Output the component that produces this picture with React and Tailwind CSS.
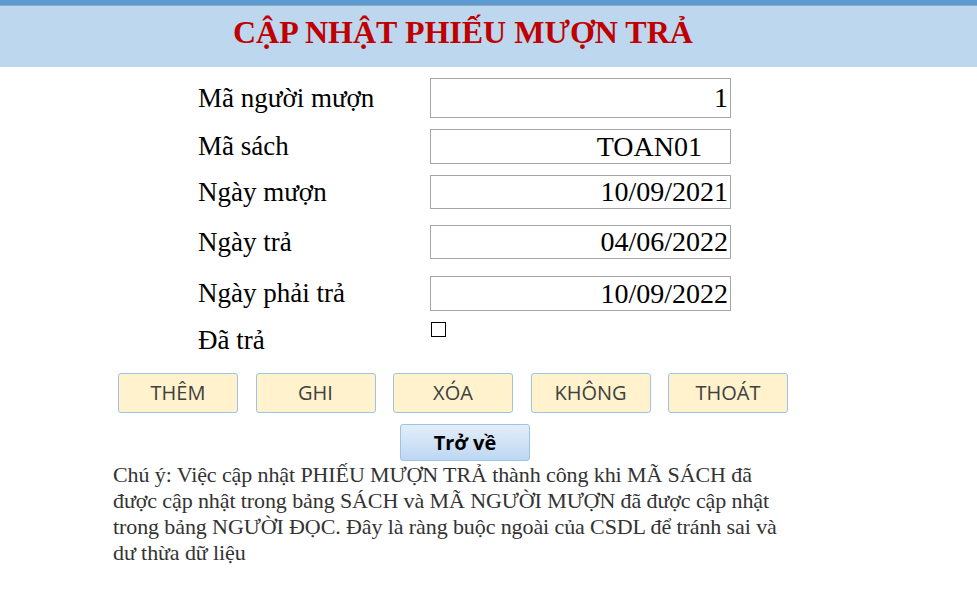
import React from "react";

const serif = { fontFamily: '"Liberation Serif", "Times New Roman", serif' };

function Row({ label, value, h, mt, pr = "pr-[2px]" }) {
  return (
    <div className={`flex items-center ${mt}`}>
      <div className="w-[232px] text-[27px] leading-none text-black" style={serif}>
        {label}
      </div>
      <div
        className={`w-[301px] ${h} border border-[#a6a6a6] flex items-center justify-end ${pr} text-[28px] leading-none text-black`}
        style={serif}
      >
        {value}
      </div>
    </div>
  );
}

export default function App() {
  const btns = ["THÊM", "GHI", "XÓA", "KHÔNG", "THOÁT"];
  return (
    <div className="w-[977px] h-[593px] bg-white overflow-hidden">
      <div className="h-[5px] bg-[#5b9bd5]" />
      <div className="h-px bg-[#9aa9b8]" />
      <div className="h-[61px] bg-[#bdd7ee] flex items-start pl-[233px] pt-[10px]">
        <h1
          className="text-[32px] font-bold text-[#c00000] leading-none"
          style={serif}
        >
          CẬP NHẬT PHIẾU MƯỢN TRẢ
        </h1>
      </div>

      <div className="pl-[198px]">
        <Row label="Mã người mượn" value="1" h="h-[40px]" mt="mt-[11px]" />
        <Row label="Mã sách" value="TOAN01" h="h-[35px]" mt="mt-[11px]" pr="pr-[28px]" />
        <Row label="Ngày mượn" value="10/09/2021" h="h-[34px]" mt="mt-[11px]" />
        <Row label="Ngày trả" value="04/06/2022" h="h-[34px]" mt="mt-[16px]" />
        <Row label="Ngày phải trả" value="10/09/2022" h="h-[35px]" mt="mt-[17px]" />
        <div className="flex items-start mt-[11px]">
          <div className="w-[232px] pt-[5px] text-[27px] leading-none text-black" style={serif}>
            Đã trả
          </div>
          <div className="w-[15px] h-[15px] border border-black ml-px" />
        </div>
      </div>

      <div className="flex gap-[17.5px] pl-[118px] mt-[19px]">
        {btns.map((b) => (
          <div
            key={b}
            className="w-[120px] h-[40px] rounded-[3px] border border-[#9dc3e6] bg-[#fff2cc] flex items-center justify-center text-[20px] text-[#404040]"
            style={{ fontFamily: '"Open Sans", sans-serif' }}
          >
            {b}
          </div>
        ))}
      </div>

      <div className="pl-[400px] mt-[11px]">
        <div
          className="w-[130px] h-[37px] rounded-[3px] border border-[#9dc3e6] bg-gradient-to-b from-[#e3eefa] to-[#bdd7f3] flex items-center justify-center text-[20px] font-bold text-black"
          style={{ fontFamily: '"Open Sans", sans-serif' }}
        >
          Trở về
        </div>
      </div>

      <p
        className="pl-[113px] mt-[1px] text-[22px] leading-[26px] text-[#333333] tracking-[-0.1px]"
        style={serif}
      >
        Chú ý: Việc cập nhật PHIẾU MƯỢN TRẢ thành công khi MÃ SÁCH đã
        <br />
        được cập nhật trong bảng SÁCH và MÃ NGƯỜI MƯỢN đã được cập nhật
        <br />
        trong bảng NGƯỜI ĐỌC. Đây là ràng buộc ngoài của CSDL để tránh sai và
        <br />
        dư thừa dữ liệu
      </p>
    </div>
  );
}
